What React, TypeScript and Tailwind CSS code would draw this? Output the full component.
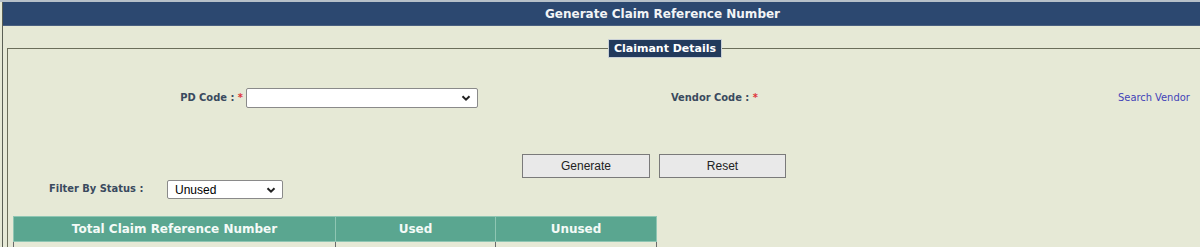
import React from "react";

function Chevron() {
  return (
    <svg width="10" height="10" viewBox="0 0 10 10" className="shrink-0">
      <path d="M1.5 3.2 L5 6.7 L8.5 3.2" fill="none" stroke="#222" strokeWidth="2" />
    </svg>
  );
}

function FakeSelect({ value, className }: { value?: string; className: string }) {
  return (
    <div
      className={`flex items-center justify-between bg-white border border-[#8a8a8a] rounded-[2px] pl-[7px] pr-[6px] text-[12px] text-black ${className}`}
      style={{ fontFamily: "'Liberation Sans', Arial, sans-serif" }}
    >
      <span>{value}</span>
      <Chevron />
    </div>
  );
}

const cond = { fontFamily: "'DejaVu Sans Condensed', 'DejaVu Sans', Tahoma, sans-serif" };

export default function App() {
  const label = "text-[11px] font-bold text-[#3a4a5e]";
  return (
    <div
      className="w-[1200px] h-[247px] overflow-hidden bg-[#e6e9d6] border-t-2 border-[#b6c0c9]"
      style={{ fontFamily: "'DejaVu Sans', Verdana, sans-serif" }}
    >
      <div className="w-[1320px] ml-[2px] border-l border-[#5a5f55] h-full">
        {/* Header */}
        <div className="h-[24px] bg-[#2c4870] flex items-center justify-center pt-[1px] text-[12px] font-bold text-[#f2f4f6] border-b border-[#4a6080]">
          Generate Claim Reference Number
        </div>

        <fieldset className="ml-[4px] mt-[13px] border border-[#6b6e5a] border-b-0 border-r-0 h-[300px]">
          <legend className="mx-auto px-[5px] h-[19px] bg-[#223a5c] border border-[#c9d0d6] text-[11px] font-bold text-white leading-[17px]">
            Claimant Details
          </legend>

          {/* Row 1 */}
          <div className="flex items-center mt-[30px] h-[20px]" style={cond}>
            <div className={`w-[238px] text-right pr-[3px] ${label}`}>
              PD Code : <span className="text-[#e0353b]">*</span>
            </div>
            <FakeSelect className="w-[232px] h-[20px]" />
            <div className={`ml-[193px] w-[447px] ${label}`}>
              Vendor Code : <span className="text-[#e0353b]">*</span>
            </div>
            <a className="text-[11px] text-[#4343b8]">Search Vendor</a>
          </div>

          {/* Buttons */}
          <div className="flex mt-[46px] ml-[514px] gap-[9px]">
            <button
              className="w-[128px] h-[24px] bg-[#e9e9e9] border border-[#7a7a7a] text-[12px] text-[#222]"
              style={{ fontFamily: "'Liberation Sans', Arial, sans-serif" }}
            >
              Generate
            </button>
            <button
              className="w-[127px] h-[24px] bg-[#e9e9e9] border border-[#7a7a7a] text-[12px] text-[#222]"
              style={{ fontFamily: "'Liberation Sans', Arial, sans-serif" }}
            >
              Reset
            </button>
          </div>

          {/* Filter */}
          <div className="flex items-center mt-[2px] h-[19px]">
            <div className={`ml-[41px] w-[118px] ${label}`} style={cond}>
              Filter By Status :
            </div>
            <FakeSelect value="Unused" className="w-[116px] h-[19px]" />
          </div>

          {/* Table */}
          <table className="ml-[5px] mt-[17px] border-collapse text-[12px]">
            <thead>
              <tr className="h-[25px] bg-[#5aa690] text-[#f4faf7] font-bold">
                <th className="w-[322px] border border-[#8fc6b3]">Total Claim Reference Number</th>
                <th className="w-[160px] border border-[#8fc6b3]">Used</th>
                <th className="w-[161px] border border-[#8fc6b3]">Unused</th>
              </tr>
            </thead>
            <tbody>
              <tr className="h-[25px]">
                <td className="border border-[#6a6a6a]"></td>
                <td className="border border-[#6a6a6a]"></td>
                <td className="border border-[#6a6a6a]"></td>
              </tr>
            </tbody>
          </table>
        </fieldset>
      </div>
    </div>
  );
}
